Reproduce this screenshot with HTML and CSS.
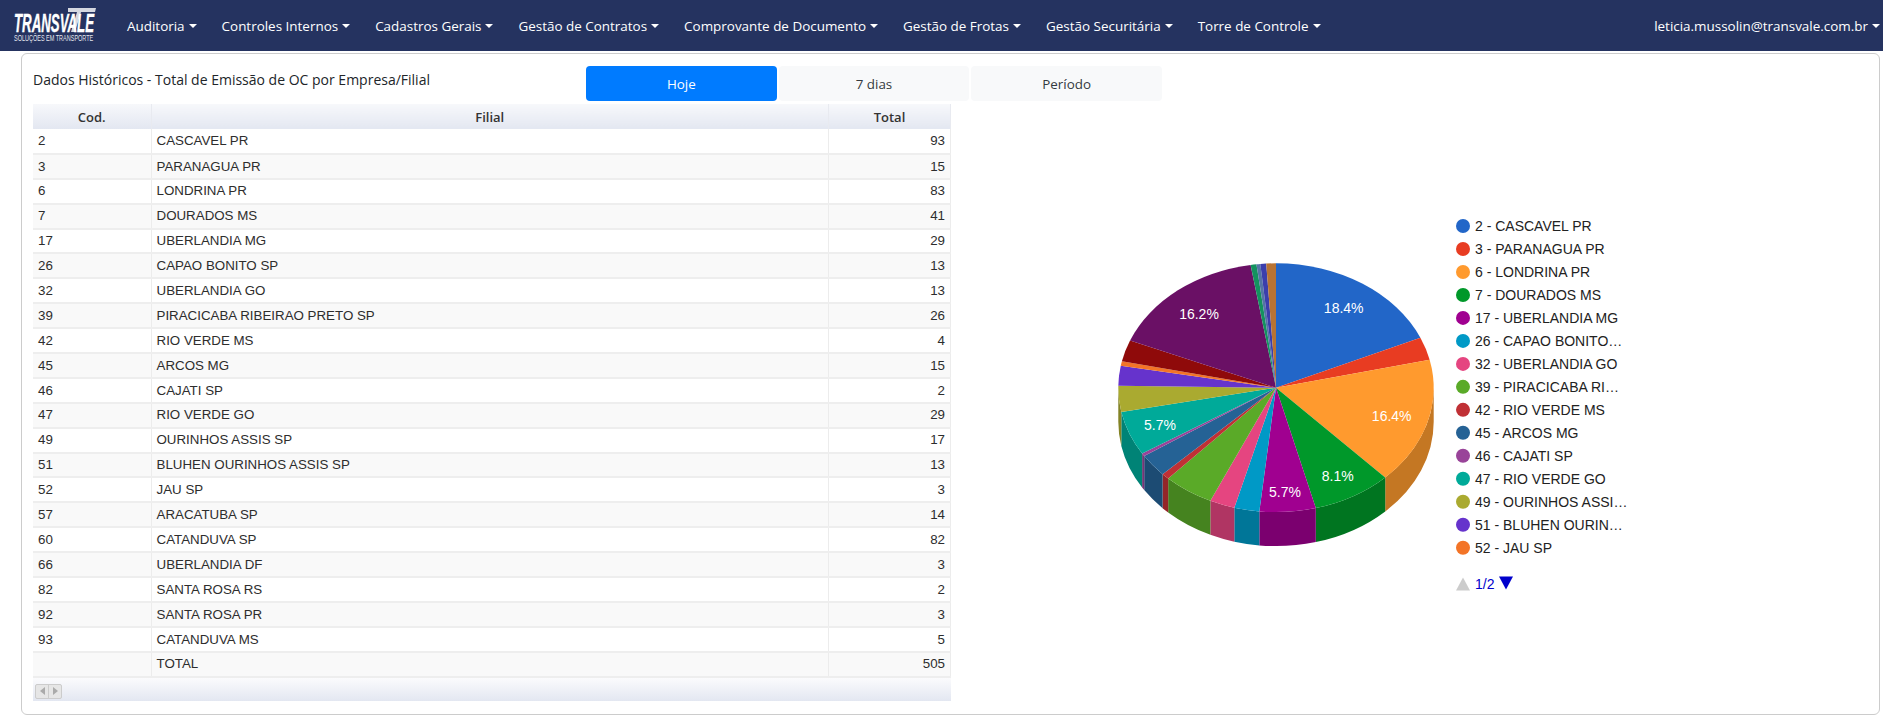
FILE: index.html
```html
<!DOCTYPE html>
<html>
<head>
    <title>Dados Históricos</title>
    <link rel="stylesheet" href="styles.css">
</head>
<body>
    <nav class="navbar">
        <svg class="logo" width="84" height="36" viewBox="0 0 84 36">
            <path class="logo-road" d="M55 0h28l-1 4H68l-6 20h-4l6-20h-9z"/>
            <text class="logo-name" transform="translate(1 24) scale(0.51 1)">TRANSVALE</text>
            <text class="logo-sub" transform="translate(1 33) scale(0.58 1)">SOLUÇÕES EM TRANSPORTE</text>
        </svg>
        <ul class="nav-list">
            <li class="nav-item">Auditoria</li>
            <li class="nav-item">Controles Internos</li>
            <li class="nav-item">Cadastros Gerais</li>
            <li class="nav-item">Gestão de Contratos</li>
            <li class="nav-item">Comprovante de Documento</li>
            <li class="nav-item">Gestão de Frotas</li>
            <li class="nav-item">Gestão Securitária</li>
            <li class="nav-item">Torre de Controle</li>
        </ul>
        <div class="nav-item nav-user">leticia.mussolin@transvale.com.br</div>
    </nav>

    <main class="card">
        <div class="card-top">
            <h1 class="card-title">Dados Históricos - Total de Emissão de OC por Empresa/Filial</h1>
            <div class="tabs">
                <a class="tab active">Hoje</a>
                <a class="tab">7 dias</a>
                <a class="tab">Período</a>
            </div>
        </div>
        <div class="card-body">
            <div class="grid">
                <table class="grid-table">
                    <thead>
                        <tr><th class="col-cod">Cod.</th><th class="col-filial">Filial</th><th class="col-total">Total</th></tr>
                    </thead>
                    <tbody>
                        <tr><td>2</td><td>CASCAVEL PR</td><td class="num">93</td></tr>
                        <tr><td>3</td><td>PARANAGUA PR</td><td class="num">15</td></tr>
                        <tr><td>6</td><td>LONDRINA PR</td><td class="num">83</td></tr>
                        <tr><td>7</td><td>DOURADOS MS</td><td class="num">41</td></tr>
                        <tr><td>17</td><td>UBERLANDIA MG</td><td class="num">29</td></tr>
                        <tr><td>26</td><td>CAPAO BONITO SP</td><td class="num">13</td></tr>
                        <tr><td>32</td><td>UBERLANDIA GO</td><td class="num">13</td></tr>
                        <tr><td>39</td><td>PIRACICABA RIBEIRAO PRETO SP</td><td class="num">26</td></tr>
                        <tr><td>42</td><td>RIO VERDE MS</td><td class="num">4</td></tr>
                        <tr><td>45</td><td>ARCOS MG</td><td class="num">15</td></tr>
                        <tr><td>46</td><td>CAJATI SP</td><td class="num">2</td></tr>
                        <tr><td>47</td><td>RIO VERDE GO</td><td class="num">29</td></tr>
                        <tr><td>49</td><td>OURINHOS ASSIS SP</td><td class="num">17</td></tr>
                        <tr><td>51</td><td>BLUHEN OURINHOS ASSIS SP</td><td class="num">13</td></tr>
                        <tr><td>52</td><td>JAU SP</td><td class="num">3</td></tr>
                        <tr><td>57</td><td>ARACATUBA SP</td><td class="num">14</td></tr>
                        <tr><td>60</td><td>CATANDUVA SP</td><td class="num">82</td></tr>
                        <tr><td>66</td><td>UBERLANDIA DF</td><td class="num">3</td></tr>
                        <tr><td>82</td><td>SANTA ROSA RS</td><td class="num">2</td></tr>
                        <tr><td>92</td><td>SANTA ROSA PR</td><td class="num">3</td></tr>
                        <tr><td>93</td><td>CATANDUVA MS</td><td class="num">5</td></tr>
                        <tr><td></td><td>TOTAL</td><td class="num">505</td></tr>
                    </tbody>
                </table>
                <div class="grid-scroll">
                    <div class="scroll-btn"><span class="arrow-left"></span><span class="arrow-right"></span></div>
                </div>
            </div>
            <svg id="chart" class="chart" width="920" height="596" viewBox="0 0 920 596"></svg>
        </div>
    </main>

    <script src="chart.js"></script>
</body>
</html>
```

FILE: styles.css
```css
* {
    box-sizing: border-box;
}
body {
    margin: 0;
    height: 719px;
    overflow: hidden;
    background-color: #fff;
    font-family: "Open Sans", "Noto Sans", Arial, sans-serif;
    color: #212529;
}

.navbar {
    display: flex;
    align-items: center;
    height: 51px;
    padding: 0 3px 0 13px;
    background-color: #253360;
}
.logo {
    flex: none;
    margin-top: 1px;
}
.logo-name {
    font: italic bold 26px "Liberation Sans", Arial, sans-serif;
    fill: #fff;
    stroke: #fff;
    stroke-width: 0.4px;
}
.logo-road {
    fill: #d5d8e0;
}
.logo-sub {
    font: 9.5px "Liberation Sans", Arial, sans-serif;
    fill: #e4e6ed;
}
.nav-list {
    display: flex;
    flex: 1;
    gap: 25px;
    margin: 0 0 0 30px;
    padding: 0;
    list-style: none;
}
.nav-item {
    color: #fff;
    font-size: 13.45px;
    white-space: nowrap;
}
.nav-item::after {
    content: "";
    display: inline-block;
    margin-left: 4px;
    vertical-align: 3px;
    border-top: 4px solid #fff;
    border-left: 4px solid transparent;
    border-right: 4px solid transparent;
}

.card {
    height: 662px;
    margin: 2px 3px 0 21px;
    padding: 12px 0 0 11px;
    border: 1px solid #ccc;
    border-radius: 6px;
}
.card-top {
    display: flex;
    height: 38px;
}
.card-title {
    width: 553px;
    margin: 4px 0 0;
    font-size: 14px;
    font-weight: 500;
    color: #212529;
}
.tabs {
    display: flex;
    gap: 2px;
    height: 35px;
}
.tab {
    display: flex;
    align-items: center;
    justify-content: center;
    width: 190.67px;
    border-radius: 4px;
    background-color: #f8f9fa;
    font-size: 13.4px;
    color: #343a40;
}
.tab.active {
    background-color: #007bff;
    color: #fff;
}

.card-body {
    display: flex;
}
.grid {
    flex: none;
    width: 918px;
}
.grid-table {
    width: 100%;
    table-layout: fixed;
    border-collapse: collapse;
    font-family: "Liberation Sans", Arial, sans-serif;
    font-size: 13.33px;
    color: #2d2d2d;
}
.grid-table th {
    height: 25px;
    padding: 0;
    border-right: 1px solid #e8eaf0;
    background: linear-gradient(#f7f8fb, #e3e7f1);
    font-family: "Open Sans", Arial, sans-serif;
    font-size: 13px;
    font-weight: 600;
    color: #333;
}
.grid-table td {
    height: 24.9px;
    padding: 0 5px 0.5px;
    border-right: 1px solid #ececec;
    border-bottom: 2px solid #eee;
}
.grid-table tbody tr:nth-child(even) td {
    background-color: #f9f9f9;
}
.col-cod {
    width: 118px;
}
.col-total {
    width: 122px;
}
.num {
    text-align: right;
}
.grid-scroll {
    height: 23px;
    padding: 6px 0 0 2px;
    background: linear-gradient(#fbfbfd, #e3e7f1);
}
.scroll-btn {
    display: flex;
    width: 27px;
    height: 15px;
    border: 1px solid #ccc;
    border-radius: 2px;
    background-color: #e6e6e6;
}
.arrow-left, .arrow-right {
    display: flex;
    flex: 1;
    align-items: center;
    justify-content: center;
}
.arrow-left {
    border-right: 1px solid #ccc;
}
.arrow-left::before {
    content: "";
    border-top: 4px solid transparent;
    border-bottom: 4px solid transparent;
    border-right: 5px solid #aaa;
}
.arrow-right::before {
    content: "";
    border-top: 4px solid transparent;
    border-bottom: 4px solid transparent;
    border-left: 5px solid #aaa;
}

.chart {
    flex: none;
    font-family: "Liberation Sans", Arial, sans-serif;
}
.pie-label {
    font-size: 14px;
    fill: #fff;
    text-anchor: middle;
}
.legend-text {
    font-size: 14px;
    fill: #222;
}
.legend-page {
    font-size: 14px;
    fill: #0000cc;
}
```

FILE: chart.js
```js
// total de emissao por filial, na ordem da tabela
// [valor, cor, legenda, posicao do rotulo]
const slices = [
    [93, '#2266c8', '2 - CASCAVEL PR', [392.7, 204]],
    [15, '#e83c22', '3 - PARANAGUA PR'],
    [83, '#ff9a2e', '6 - LONDRINA PR', [440.7, 312]],
    [41, '#00982a', '7 - DOURADOS MS', [386.7, 372]],
    [29, '#a00090', '17 - UBERLANDIA MG', [334, 388]],
    [13, '#0099c6', '26 - CAPAO BONITO…'],
    [13, '#e54580', '32 - UBERLANDIA GO'],
    [26, '#5aaa28', '39 - PIRACICABA RI…'],
    [4, '#c03035', '42 - RIO VERDE MS'],
    [15, '#256295', '45 - ARCOS MG'],
    [2, '#994499', '46 - CAJATI SP'],
    [29, '#00aa99', '47 - RIO VERDE GO', [209, 321]],
    [17, '#aaaa30', '49 - OURINHOS ASSI…'],
    [13, '#6633cc', '51 - BLUHEN OURIN…'],
    [3, '#f37427', '52 - JAU SP'],
    [14, '#8f0a0a'],
    [82, '#6a1065', null, [248, 210]],
    [3, '#14925f'],
    [2, '#5574a6'],
    [3, '#3b3eac'],
    [5, '#b87333']
];

const svg = document.getElementById('chart');
const cx = 325, cy = 283.7, rx = 157.7, ry = 124.4, depth = 34;
const total = slices.reduce((sum, s) => sum + s[0], 0);
const tail = Math.PI / 2, head = Math.PI * 1.5;

function add(tag, attrs, text) {
    const el = document.createElementNS('http://www.w3.org/2000/svg', tag);
    for (const key in attrs) el.setAttribute(key, attrs[key]);
    if (text) el.textContent = text;
    svg.appendChild(el);
}

function point(angle, drop) {
    const x = cx + rx * Math.sin(angle);
    const y = cy - ry * Math.cos(angle) + (drop || 0);
    return x.toFixed(2) + ' ' + y.toFixed(2);
}

function darker(hex) {
    const n = parseInt(hex.slice(1), 16);
    const part = shift => Math.round(((n >> shift) & 255) * 0.77);
    return 'rgb(' + part(16) + ',' + part(8) + ',' + part(0) + ')';
}

// paredes primeiro, o topo fica por cima
let angle = 0;
slices.forEach(s => {
    const end = angle + s[0] / total * Math.PI * 2;
    const from = Math.max(angle, tail), to = Math.min(end, head);
    if (from < to) {
        add('path', {
            fill: darker(s[1]),
            d: 'M' + point(from) + 'A' + rx + ' ' + ry + ' 0 0 1 ' + point(to) +
               'L' + point(to, depth) + 'A' + rx + ' ' + ry + ' 0 0 0 ' + point(from, depth) + 'Z'
        });
    }
    angle = end;
});

angle = 0;
slices.forEach(s => {
    const end = angle + s[0] / total * Math.PI * 2;
    const large = end - angle > Math.PI ? 1 : 0;
    add('path', {
        fill: s[1],
        d: 'M' + cx + ' ' + cy + 'L' + point(angle) + 'A' + rx + ' ' + ry + ' 0 ' + large + ' 1 ' + point(end) + 'Z'
    });
    angle = end;
});

slices.forEach(s => {
    if (!s[3]) return;
    add('text', { class: 'pie-label', x: s[3][0], y: s[3][1] + 5 }, (s[0] / total * 100).toFixed(1) + '%');
});

// legenda, pagina 1 de 2
slices.filter(s => s[2]).forEach((s, i) => {
    const y = 122 + i * 22.98;
    add('circle', { cx: 512, cy: y, r: 7, fill: s[1] });
    add('text', { class: 'legend-text', x: 524, y: y + 5 }, s[2]);
});
add('path', { fill: '#ccc', d: 'M505 486.5l7-13 7 13z' });
add('text', { class: 'legend-page', x: 524, y: 485 }, '1/2');
add('path', { fill: '#0000cc', d: 'M548 472.5h14l-7 13z' });
```
